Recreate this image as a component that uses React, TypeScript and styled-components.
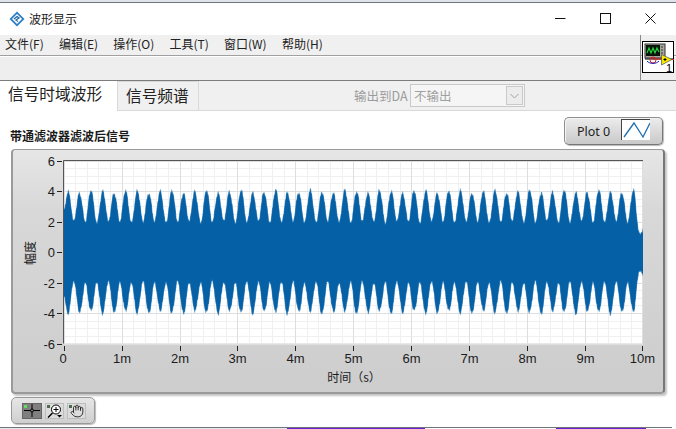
import React from "react";
import styled, { createGlobalStyle } from "styled-components";
import { Hand } from "lucide-react";

const GlobalStyle = createGlobalStyle`
  html, body { margin: 0; padding: 0; background: #fff; }
  * { box-sizing: border-box; }
`;

const FONT = `"Noto Sans CJK SC", "Noto Sans", sans-serif`;

const App_ = styled.div`
  width: 676px;
  height: 429px;
  overflow: hidden;
  display: flex;
  flex-direction: column;
  background: #fff;
  font-family: ${FONT};
  color: #1a1a1a;
`;
const DesktopTop = styled.div`
  height: 2px;
  background: #dfe3ea;
  flex: none;
`;
const Win = styled.div`
  flex: none;
  height: 426px;
  width: 676px;
  border-top: 1px solid #6f747d;
  display: flex;
  flex-direction: column;
  background: #fff;
`;
const TitleBar = styled.div`
  height: 32px;
  flex: none;
  display: flex;
  align-items: center;
  padding-left: 9px;
  padding-bottom: 1px;
`;
const TitleText = styled.span`
  font-size: 12px;
  margin-left: 4px;
  letter-spacing: 0;
  color: #222;
`;
const WinButtons = styled.div`
  margin-left: auto;
  display: flex;
  margin-right: 3px;
`;
const WinButton = styled.div`
  width: 45px;
  height: 30px;
  display: flex;
  align-items: center;
  justify-content: center;
`;
const MenuBar = styled.div`
  height: 21px;
  flex: none;
  background: #f0f0f0;
  border-bottom: 1px solid #a0a0a0;
  display: flex;
  align-items: center;
  padding: 0 0 2px 5px;
  gap: 15.2px;
  position: relative;
`;
const MenuItem = styled.span`
  font-size: 12px;
  line-height: 18px;
  color: #222;
`;
const ToolBar = styled.div`
  height: 25px;
  flex: none;
  background: #eeeeee;
  border-top: 1px solid #fff;
  border-bottom: 1px solid #7c7c7c;
`;
const IconColumn = styled.div`
  position: absolute;
  right: 0;
  top: 0;
  width: 36px;
  height: 45px;
  z-index: 1;
  border-left: 1px solid #8a8a8a;
  padding: 6px 0 0 1px;
`;
const TabBar = styled.div`
  height: 30px;
  flex: none;
  background: #f0f0f0;
  border-bottom: 1px solid #d9d9d9;
  display: flex;
  position: relative;
`;
const Tab = styled.div<{ $active?: boolean }>`
  height: ${(p) => (p.$active ? "30px" : "29px")};
  font-size: 15.7px;
  line-height: 26px;
  color: #222;
  background: ${(p) => (p.$active ? "#fff" : "#f0f0f0")};
  padding: ${(p) => (p.$active ? "0 14px 0 8px" : "1px 9px 0 8px")};
  width: ${(p) => (p.$active ? "117px" : "82px")};
  white-space: nowrap;
  border: ${(p) => (p.$active ? "none" : "1px solid #d9d9d9")};
  border-bottom: none;
`;
const OutputGroup = styled.div`
  position: absolute;
  left: 354px;
  top: 3px;
  display: flex;
  align-items: center;
  gap: 3px;
`;
const OutputLabel = styled.span`
  font-size: 12.5px;
  color: #9c9c9c;
  white-space: nowrap;
  width: 53px;
`;
const Select = styled.div`
  width: 115px;
  height: 23px;
  border: 1px solid #c9c9c9;
  background: #f5f5f5;
  display: flex;
  align-items: center;
  justify-content: space-between;
  padding: 0 1px 0 3px;
  font-size: 12.5px;
  color: #a0a0a0;
`;
const SelectArrow = styled.div`
  width: 17px;
  height: 19px;
  border: 1px solid #c9c9c9;
  background: #ececec;
  display: flex;
  align-items: center;
  justify-content: center;
`;
const Content = styled.div`
  flex: 1;
  position: relative;
  display: flex;
  flex-direction: column;
  padding: 0 0 0 11px;
  background: #fff;
`;
const HeaderRow = styled.div`
  height: 38px;
  flex: none;
  display: flex;
  align-items: flex-end;
  justify-content: space-between;
  padding: 0 13px 4px 0;
`;
const ChartTitle = styled.div`
  font-size: 12px;
  font-weight: 700;
  line-height: 16px;
  margin-left: -1px;
  margin-bottom: 1px;
  color: #1a1a1a;
`;
const Legend = styled.div`
  width: 99px;
  height: 28px;
  border-radius: 5px;
  border: 1px solid #8f8f8f;
  border-right-color: #777;
  border-bottom-color: #777;
  box-shadow: 1px 1px 1px #bbb, inset 1px 1px 0 #f4f4f4;
  background: linear-gradient(#ececec, #c9c9c9);
  display: flex;
  align-items: center;
  padding-left: 12px;
  font-family: "Noto Sans", sans-serif;
  font-size: 12.5px;
  color: #222;
`;
const Swatch = styled.div`
  width: 29px;
  height: 21px;
  margin-left: auto;
  margin-right: 12px;
  margin-top: -3px;
  background: #fff;
  border-top: 1px solid #444;
  border-left: 1px solid #444;
  display: flex;
`;
const PlotPanel = styled.div`
  width: 654px;
  height: 245px;
  flex: none;
  border-radius: 4px;
  border: 1px solid #9a9a9a;
  border-right: 2px solid #777;
  border-bottom: 2px solid #9a9a9a;
  border-left: 2px solid #9a9a9a;
  box-shadow: 2px 2px 2px #c4c4c4;
  background: linear-gradient(#e6e6e6 0, #d8d8d8 25%, #cdcdcd 100%);
  overflow: hidden;
`;
const Palette = styled.div`
  margin-top: 3px;
  width: 84px;
  height: 27px;
  flex: none;
  border-radius: 5px;
  border: 1px solid #999;
  box-shadow: 1px 1px 1px #bbb;
  background: linear-gradient(#e6e6e6, #cfcfcf);
  display: flex;
  align-items: center;
  gap: 3px;
  padding: 0 0 0 10px;
`;
const PaletteButton = styled.div<{ $active?: boolean }>`
  width: ${(p) => (p.$active ? "20px" : "19px")};
  height: 16px;
  position: relative;
  background: ${(p) => (p.$active ? "#7f7f7f" : "#dcdcdc")};
  border: 1px solid ${(p) => (p.$active ? "#666" : "#bdbdbd")};
  display: flex;
  align-items: center;
  justify-content: center;
`;
const Led = styled.span<{ $on?: boolean }>`
  position: absolute;
  left: 1px;
  top: 1px;
  width: 3px;
  height: 3px;
  background: ${(p) => (p.$on ? "#5ee05e" : "#4c6a4c")};
`;
const BottomBorder = styled.div`
  position: absolute;
  left: 0;
  bottom: 0;
  width: 672px;
  height: 1px;
  background: #6f747d;
`;
const Desktop = styled.div`
  flex: none;
  height: 1px;
  display: flex;
  background: #fff;
`;
const DesktopSeg = styled.div<{ $w: number; $c: string }>`
  width: ${(p) => p.$w}px;
  background: ${(p) => p.$c};
`;
const IconSvg = styled.svg`
  display: block;
  flex: none;
`;
const ChartSvg = styled.svg`
  display: block;
  margin: -1px 0 0 -2px;
`;
const AxisText = styled.text`
  font-family: "Liberation Sans", sans-serif;
  font-size: 13px;
  fill: #1c1c1c;
`;
const AxisTitle = styled.text`
  font-family: ${FONT};
  font-size: 12px;
  fill: #1c1c1c;
`;

const X0 = 63.5;
const X1 = 643;
const Y0 = 160.5;
const Y1 = 343.5;
const Yz = 252;
const PU = 15.25;

function envelope(x: number, side: number): number {
  const th = ((x - 68) / 11.54) * Math.PI * 2;
  const base = Math.sqrt(10 + 6 * Math.cos(th));
  const slow = 1 + 0.03 * Math.sin(x * 0.37 + side) + 0.018 * Math.sin(x * 1.3);
  const fade = x > 635 ? Math.max(0.45, 1 - (x - 635) * 0.08) : 1;
  const start = x < 66 ? Math.max(base, 2.9) : base;
  return Math.min(start * slow, 4.16) * fade + 0.11 * Math.sin(x * 5.1) * Math.sin(x * 1.7 + side);
}

function wavePath(shrink: number): string {
  const up: string[] = [];
  const dn: string[] = [];
  for (let x = X0 + 0.5; x <= X1; x += 0.5) {
    const t = Math.min(envelope(x - shrink, 0), envelope(x + shrink, 0)) - shrink * 0.12;
    const b = Math.min(envelope(x - shrink, 2), envelope(x + shrink, 2)) - shrink * 0.12;
    up.push(`${x.toFixed(1)} ${(Yz - t * PU).toFixed(1)}`);
    dn.unshift(`${x.toFixed(1)} ${(Yz + b * PU).toFixed(1)}`);
  }
  return `M${up.join("L")}L${dn.join("L")}Z`;
}

const outerWave = wavePath(0);
const innerWave = wavePath(0.4);

const xTicks = [
  { x: 64, label: "0" },
  { x: 122, label: "1m" },
  { x: 180, label: "2m" },
  { x: 237.5, label: "3m" },
  { x: 295.5, label: "4m" },
  { x: 353.5, label: "5m" },
  { x: 411.5, label: "6m" },
  { x: 469.5, label: "7m" },
  { x: 527.5, label: "8m" },
  { x: 585.5, label: "9m" },
  { x: 642.5, label: "10m" },
];
const yTicks = [6, 4, 2, 0, -2, -4, -6];
const yOf = (v: number) => Math.round(Yz - v * PU) + 0.5;

function Chart() {
  const minorX: number[] = [];
  for (let i = 0; i < 50; i++) if (i % 5) minorX.push(Math.round(X0 + i * 11.59) + 0.5);
  const minorY: number[] = [];
  for (let i = 0; i < 24; i++) if (i % 4) minorY.push(Math.round(Y0 + i * 7.625) + 0.5);
  return (
    <ChartSvg width={654} height={245} viewBox="11 149 654 245">
      <rect x={X0} y={Y0} width={X1 - X0} height={Y1 - Y0} fill="#fff" />
      {minorX.map((x) => (
        <line key={x} x1={x} x2={x} y1={Y0} y2={Y1} stroke="#f0f0f0" />
      ))}
      {minorY.map((y) => (
        <line key={y} x1={X0} x2={X1} y1={y} y2={y} stroke="#f0f0f0" />
      ))}
      {xTicks.map((t) => (
        <line key={t.x} x1={Math.floor(t.x) + 0.5} x2={Math.floor(t.x) + 0.5} y1={Y0} y2={Y1} stroke="#dedede" />
      ))}
      {yTicks.map((v) => (
        <line key={v} x1={X0} x2={X1} y1={yOf(v)} y2={yOf(v)} stroke="#dedede" />
      ))}
      <path d={outerWave} fill="#4f90c2" />
      <path d={innerWave} fill="#0560a5" />
      <path d={`M${X0} ${Y1}V${Y0}H${X1}`} fill="none" stroke="#555" />
      {yTicks.map((v) => (
        <g key={v}>
          <line x1={57} x2={62} y1={yOf(v)} y2={yOf(v)} stroke="#222" />
          <AxisText x={55} y={yOf(v) + 4.5} textAnchor="end">
            {v}
          </AxisText>
        </g>
      ))}
      {xTicks.map((t) => (
        <g key={t.x}>
          <line x1={Math.floor(t.x) + 0.5} x2={Math.floor(t.x) + 0.5} y1={346} y2={351} stroke="#222" />
          <AxisText x={t.label === "0" ? 63 : t.x} y={363} textAnchor="middle">
            {t.label}
          </AxisText>
        </g>
      ))}
      <AxisTitle x={354} y={382} textAnchor="middle">
        时间（s）
      </AxisTitle>
      <AxisTitle x={0} y={0} textAnchor="middle" transform="translate(35 253) rotate(-90)">
        幅度
      </AxisTitle>
    </ChartSvg>
  );
}

function Logo() {
  return (
    <IconSvg width={16} height={16} viewBox="0 0 16 16">
      <path d="M8 .5 15.5 8 8 15.5.5 8Z" fill="#2a7ec4" />
      <path d="M8 3 13 8 8 13 3 8Z" fill="#fff" />
      <path d="M5 8 8 5.5 10 7 7 9 9 10.5" fill="none" stroke="#1e66a8" strokeWidth="1.3" />
    </IconSvg>
  );
}

function ViIcon() {
  return (
    <IconSvg width={32} height={32} viewBox="0 0 32 32">
      <rect x=".5" y=".5" width="31" height="31" fill="#fff" stroke="#000" />
      <rect x="3" y="3" width="20" height="14" fill="#a8a8a0" stroke="#333" />
      <rect x="4" y="4" width="14" height="11" fill="#0a140a" />
      <path d="M5 12 7 7 9 12 11 7 13 12 15 7 17 11" fill="none" stroke="#22d83a" strokeWidth="1.2" />
      <path d="M19 6h2M19 9h2M19 12h2" stroke="#333" />
      <path d="M3 18h29" stroke="#000" />
      <path d="M10 18h11" stroke="#e02020" />
      <circle cx="11" cy="19" r="3" fill="none" stroke="#d02020" />
      <path d="M5 20a7 5 0 0 0 12 0" fill="none" stroke="#1818b0" />
      <path d="M19.5 13.5 30 18.5 19.5 24Z" fill="#f4e800" stroke="#555" strokeWidth=".7" />
      <path d="M21.5 18.5h3M23 17v3" stroke="#000" />
      <path d="M30 18.5h2" stroke="#e02020" />
      <AxisText x={24} y={30.5} style={{ fontSize: 11, fill: "#000" }}>
        1
      </AxisText>
    </IconSvg>
  );
}

export default function App() {
  return (
    <App_>
      <GlobalStyle />
      <DesktopTop />
      <Win>
        <TitleBar>
          <Logo />
          <TitleText>波形显示</TitleText>
          <WinButtons>
            <WinButton>
              <IconSvg width={11} height={11} viewBox="0 0 11 11">
                <path d="M0 5.5h10.5" stroke="#111" />
              </IconSvg>
            </WinButton>
            <WinButton>
              <IconSvg width={11} height={11} viewBox="0 0 11 11">
                <rect x=".5" y=".5" width="10" height="10" fill="none" stroke="#111" />
              </IconSvg>
            </WinButton>
            <WinButton>
              <IconSvg width={11} height={11} viewBox="0 0 11 11">
                <path d="M.5.5l10 10M10.5.5l-10 10" stroke="#111" />
              </IconSvg>
            </WinButton>
          </WinButtons>
        </TitleBar>
        <MenuBar>
          <MenuItem>文件(F)</MenuItem>
          <MenuItem>编辑(E)</MenuItem>
          <MenuItem>操作(O)</MenuItem>
          <MenuItem>工具(T)</MenuItem>
          <MenuItem>窗口(W)</MenuItem>
          <MenuItem>帮助(H)</MenuItem>
          <IconColumn>
            <ViIcon />
          </IconColumn>
        </MenuBar>
        <ToolBar />
        <TabBar>
          <Tab $active>信号时域波形</Tab>
          <Tab>信号频谱</Tab>
          <OutputGroup>
            <OutputLabel>输出到DA</OutputLabel>
            <Select>
              不输出
              <SelectArrow>
                <IconSvg width={9} height={6} viewBox="0 0 9 6">
                  <path d="M.5 1 4.5 5 8.5 1" fill="none" stroke="#a0a0a0" />
                </IconSvg>
              </SelectArrow>
            </Select>
          </OutputGroup>
        </TabBar>
        <Content>
          <HeaderRow>
            <ChartTitle>带通滤波器滤波后信号</ChartTitle>
            <Legend>
              Plot 0
              <Swatch>
                <IconSvg width={28} height={20} viewBox="0 0 28 20">
                  <path d="M2 17 12 3 21 17 28 3" fill="none" stroke="#1f6fb0" strokeWidth="1.3" />
                </IconSvg>
              </Swatch>
            </Legend>
          </HeaderRow>
          <PlotPanel>
            <Chart />
          </PlotPanel>
          <Palette>
            <PaletteButton $active>
              <Led $on />
              <IconSvg width={16} height={13} viewBox="0 0 16 13">
                <path d="M8 0v13M0 6.500h16" stroke="#000" />
                <circle cx="8" cy="6.500" r="1.500" fill="#7f7f7f" stroke="#000" />
              </IconSvg>
            </PaletteButton>
            <PaletteButton>
              <Led />
              <IconSvg width={16} height={14} viewBox="0 0 16 14">
                <circle cx="9" cy="5.500" r="4.500" fill="#fff" stroke="#000" />
                <path d="M9 3v5M6.500 5.500h5" stroke="#000" />
                <path d="M5.500 9 1 13.500" stroke="#000" strokeWidth="1.500" />
                <path d="M10 11h5l-2.500 2.500Z" fill="#000" />
              </IconSvg>
            </PaletteButton>
            <PaletteButton>
              <Led />
              <Hand size={14} strokeWidth={1.4} color="#111" />
            </PaletteButton>
          </Palette>
          <BottomBorder />
        </Content>
      </Win>
      <Desktop>
        <DesktopSeg $w={287} $c="#e8e8e8" />
        <DesktopSeg $w={138} $c="#6a1fd0" />
        <DesktopSeg $w={131} $c="#ffffff" />
        <DesktopSeg $w={90} $c="#6a1fd0" />
      </Desktop>
    </App_>
  );
}
